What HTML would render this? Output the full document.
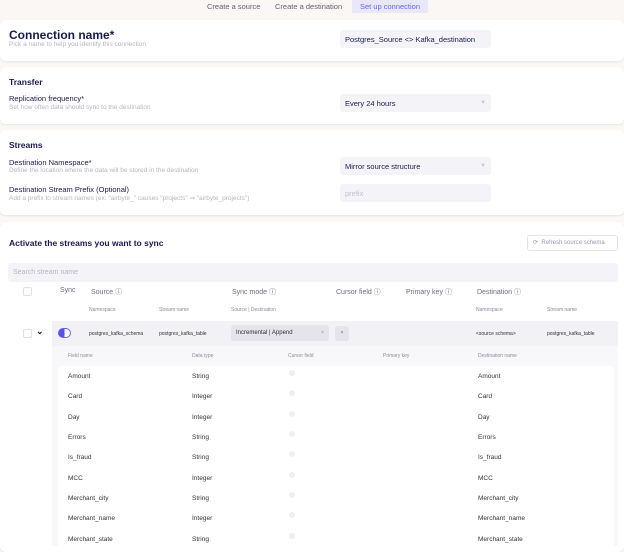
<!DOCTYPE html>
<html><head><style>
*{margin:0;padding:0;box-sizing:border-box}
body{width:624px;height:545px;overflow:hidden;background:#fbf7f4;font-family:"Liberation Sans",sans-serif;color:#1a194d;position:relative}
.a{position:absolute;white-space:nowrap}
.card{position:absolute;left:0;width:624px;background:#fff;border-radius:6px;box-shadow:0 1px 2px rgba(0,0,0,.08)}
.h{font-weight:bold;font-size:8.5px}
.l{font-size:7.5px}
.s{font-size:6.5px;color:#b5b5c3}
.in{position:absolute;left:340px;width:151px;background:#f4f4f8;border-radius:3px;font-size:7.5px;padding-left:5px;display:flex;align-items:center}
.car{position:absolute;right:5px;color:#c8c8d2;font-size:6px}
.th{font-size:7px;color:#6b6b85}
.sh{font-size:5px;color:#8b8ba0}
.fr{font-size:6.5px;color:#333}
.dot{position:absolute;width:6px;height:6px;border-radius:50%;background:#efeff3}
</style></head><body>
<div class="a" style="left:207px;top:2px;font-size:7.5px;color:#5f5f78">Create a source</div>
<div class="a" style="left:275px;top:2px;font-size:7.5px;color:#5f5f78">Create a destination</div>
<div class="a" style="left:352px;top:0;width:76px;height:13px;background:#e9e7fb;border-radius:2px;font-size:7.5px;color:#6a5ff0;text-align:center;line-height:13px">Set up connection</div>

<div class="card" style="top:20px;height:41px"></div>
<div class="a" style="left:9px;top:28px;font-weight:bold;font-size:12px">Connection name*</div>
<div class="a s" style="left:9px;top:41px">Pick a name to help you identify this connection</div>
<div class="in" style="top:30px;height:18px;left:340px;width:151px">Postgres_Source &lt;&gt; Kafka_destination</div>

<div class="card" style="top:67px;height:57px"></div>
<div class="a h" style="left:9px;top:77px">Transfer</div>
<div class="a l" style="left:9px;top:94px">Replication frequency*</div>
<div class="a s" style="left:9px;top:104px">Set how often data should sync to the destination</div>
<div class="in" style="top:94px;height:18px">Every 24 hours<span class="car">▼</span></div>

<div class="card" style="top:130px;height:85px"></div>
<div class="a h" style="left:9px;top:140px">Streams</div>
<div class="a l" style="left:9px;top:158px">Destination Namespace*</div>
<div class="a s" style="left:9px;top:167px">Define the location where the data will be stored in the destination</div>
<div class="in" style="top:157px;height:18px">Mirror source structure<span class="car">▼</span></div>
<div class="a l" style="left:9px;top:185px">Destination Stream Prefix (Optional)</div>
<div class="a s" style="left:9px;top:194px">Add a prefix to stream names (ex. "airbyte_" causes "projects" ⇒ "airbyte_projects")</div>
<div class="in" style="top:184px;height:18px;color:#c0c0cc">prefix</div>

<div class="card" style="top:222px;height:330px"></div>
<div class="a h" style="left:9px;top:238px">Activate the streams you want to sync</div>
<div class="a" style="left:527px;top:235px;width:91px;height:16px;border:1px solid #e4e4ec;border-radius:3px;font-size:6px;color:#9a9ab0;line-height:14px;padding-left:5px">⟳ &nbsp;Refresh source schema</div>
<div class="a" style="left:8px;top:263px;width:610px;height:19px;background:#f4f4f8;border-radius:3px;font-size:7px;color:#b5b5c5;padding-left:5px;line-height:19px">Search stream name</div>

<div class="a" style="left:23px;top:287px;width:9px;height:9px;border:1px solid #e0e0e8;border-radius:2px"></div>
<div class="a th" style="left:60px;top:287px">Sync</div>
<div class="a th" style="left:91px;top:287px">Source ⓘ</div>
<div class="a th" style="left:232px;top:287px">Sync mode ⓘ</div>
<div class="a th" style="left:336px;top:287px">Cursor field ⓘ</div>
<div class="a th" style="left:406px;top:287px">Primary key ⓘ</div>
<div class="a th" style="left:477px;top:287px">Destination ⓘ</div>
<div class="a sh" style="left:89px;top:307px">Namespace</div>
<div class="a sh" style="left:159px;top:307px">Stream name</div>
<div class="a sh" style="left:231px;top:307px">Source | Destination</div>
<div class="a sh" style="left:476px;top:307px">Namespace</div>
<div class="a sh" style="left:547px;top:307px">Stream name</div>

<div class="a" style="left:52px;top:321px;width:566px;height:25px;background:#f2f2f6"></div>
<div class="a" style="left:23px;top:329px;width:9px;height:9px;border:1px solid #e0e0e8;border-radius:2px;background:#fff"></div>
<div class="a" style="left:36px;top:326px;font-size:9px;font-weight:bold">⌄</div>
<div class="a" style="left:58px;top:328px;width:13px;height:10px;border-radius:5px;border:1px solid #6a5ff0;background:linear-gradient(90deg,#5a4ee8 50%,#fff 50%)"></div>
<div class="a sh" style="left:89px;top:331px;color:#333">postgres_kafka_schema</div>
<div class="a sh" style="left:159px;top:331px;color:#333">postgres_kafka_table</div>
<div class="a" style="left:231px;top:325px;width:98px;height:16px;background:#e4e4ea;border-radius:3px;font-size:6px;line-height:16px;padding-left:5px;color:#333">Incremental | Append<span style="position:absolute;right:4px;color:#bbb;font-size:5px">▼</span></div>
<div class="a" style="left:335px;top:326px;width:14px;height:15px;background:#e4e4ea;border-radius:3px;font-size:5px;color:#aaa;text-align:center;line-height:15px">▼</div>
<div class="a sh" style="left:476px;top:331px;color:#333">&lt;source schema&gt;</div>
<div class="a sh" style="left:547px;top:331px;color:#333">postgres_kafka_table</div>

<div class="a" style="left:52px;top:346px;width:566px;height:200px;background:#f8f8fa"></div>
<div class="a sh" style="left:68px;top:353px">Field name</div>
<div class="a sh" style="left:192px;top:353px">Data type</div>
<div class="a sh" style="left:288px;top:353px">Cursor field</div>
<div class="a sh" style="left:383px;top:353px">Primary key</div>
<div class="a sh" style="left:478px;top:353px">Destination name</div>
<div class="a" style="left:58px;top:366px;width:556px;height:185px;background:#fff;border-radius:4px"></div>

<div class="a fr" style="left:68px;top:373px">Amount</div><div class="a fr" style="left:192px;top:373px">String</div><div class="dot" style="left:289px;top:370px"></div><div class="a fr" style="left:478px;top:373px">Amount</div>
<div class="a fr" style="left:68px;top:393px">Card</div><div class="a fr" style="left:192px;top:393px">Integer</div><div class="dot" style="left:289px;top:390px"></div><div class="a fr" style="left:478px;top:393px">Card</div>
<div class="a fr" style="left:68px;top:414px">Day</div><div class="a fr" style="left:192px;top:414px">Integer</div><div class="dot" style="left:289px;top:411px"></div><div class="a fr" style="left:478px;top:414px">Day</div>
<div class="a fr" style="left:68px;top:434px">Errors</div><div class="a fr" style="left:192px;top:434px">String</div><div class="dot" style="left:289px;top:431px"></div><div class="a fr" style="left:478px;top:434px">Errors</div>
<div class="a fr" style="left:68px;top:454px">Is_fraud</div><div class="a fr" style="left:192px;top:454px">String</div><div class="dot" style="left:289px;top:451px"></div><div class="a fr" style="left:478px;top:454px">Is_fraud</div>
<div class="a fr" style="left:68px;top:475px">MCC</div><div class="a fr" style="left:192px;top:475px">Integer</div><div class="dot" style="left:289px;top:472px"></div><div class="a fr" style="left:478px;top:475px">MCC</div>
<div class="a fr" style="left:68px;top:495px">Merchant_city</div><div class="a fr" style="left:192px;top:495px">String</div><div class="dot" style="left:289px;top:492px"></div><div class="a fr" style="left:478px;top:495px">Merchant_city</div>
<div class="a fr" style="left:68px;top:515px">Merchant_name</div><div class="a fr" style="left:192px;top:515px">Integer</div><div class="dot" style="left:289px;top:512px"></div><div class="a fr" style="left:478px;top:515px">Merchant_name</div>
<div class="a fr" style="left:68px;top:536px">Merchant_state</div><div class="a fr" style="left:192px;top:536px">String</div><div class="dot" style="left:289px;top:533px"></div><div class="a fr" style="left:478px;top:536px">Merchant_state</div>
</body></html>
